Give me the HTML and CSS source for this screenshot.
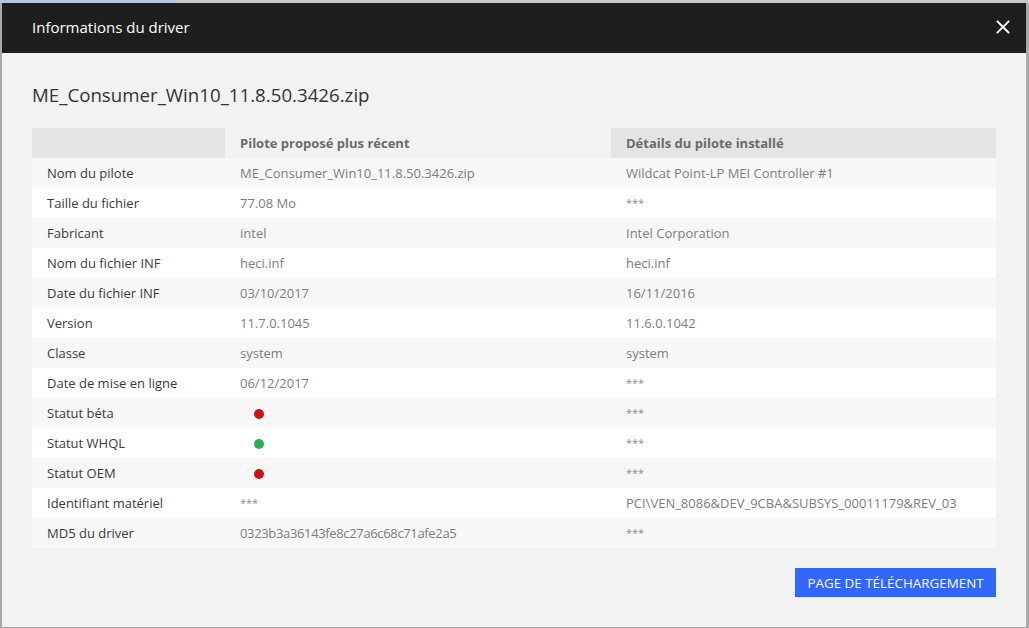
FILE: index.html
```html
<!DOCTYPE html>
<html lang="fr">
<head>
<meta charset="utf-8">
<title>Informations du driver</title>
<link rel="stylesheet" href="styles.css">
</head>
<body>
<div class="topstrip"></div>
<div class="modal">
  <div class="modal-header">
    <span class="modal-title">Informations du driver</span>
    <svg class="close" width="14" height="14" viewBox="0 0 14 14"><path d="M1.5 1.5L12.5 12.5M12.5 1.5L1.5 12.5" stroke="#fff" stroke-width="1.9" stroke-linecap="square"/></svg>
  </div>
  <div class="modal-body">
    <h2 class="file-title">ME_Consumer_Win10_11.8.50.3426.zip</h2>
    <table class="info">
      <thead>
        <tr><th class="c1"></th><th class="c2">Pilote proposé plus récent</th><th class="c3">Détails du pilote installé</th></tr>
      </thead>
      <tbody>
        <tr><td>Nom du pilote</td><td>ME_Consumer_Win10_11.8.50.3426.zip</td><td>Wildcat Point-LP MEI Controller #1</td></tr>
        <tr><td>Taille du fichier</td><td>77.08 Mo</td><td class="stars">***</td></tr>
        <tr><td>Fabricant</td><td>intel</td><td>Intel Corporation</td></tr>
        <tr><td>Nom du fichier INF</td><td>heci.inf</td><td>heci.inf</td></tr>
        <tr><td>Date du fichier INF</td><td>03/10/2017</td><td>16/11/2016</td></tr>
        <tr><td>Version</td><td>11.7.0.1045</td><td>11.6.0.1042</td></tr>
        <tr><td>Classe</td><td>system</td><td>system</td></tr>
        <tr><td>Date de mise en ligne</td><td>06/12/2017</td><td class="stars">***</td></tr>
        <tr><td>Statut béta</td><td><span class="dot red"></span></td><td class="stars">***</td></tr>
        <tr><td>Statut WHQL</td><td><span class="dot green"></span></td><td class="stars">***</td></tr>
        <tr><td>Statut OEM</td><td><span class="dot red"></span></td><td class="stars">***</td></tr>
        <tr><td>Identifiant matériel</td><td class="stars">***</td><td>PCI\VEN_8086&amp;DEV_9CBA&amp;SUBSYS_00011179&amp;REV_03</td></tr>
        <tr><td>MD5 du driver</td><td class="tight">0323b3a36143fe8c27a6c68c71afe2a5</td><td class="stars">***</td></tr>
      </tbody>
    </table>
    <div class="actions">
      <button class="btn">PAGE DE TÉLÉCHARGEMENT</button>
    </div>
  </div>
</div>
</body>
</html>
```
FILE: styles.css
```css
html, body {
  margin: 0;
  padding: 0;
}
body {
  background: #a9a9a9;
  height: 628px;
  overflow: hidden;
  font-family: "Open Sans", "Liberation Sans", sans-serif;
}
.topstrip {
  height: 3px;
  background: linear-gradient(to right, #b8c2e8 0, #b8c2e8 175px, #c8c8c8 175px);
}
.modal {
  margin-left: 2px;
  width: 1024px;
  height: 624px;
  background: #f2f2f2;
  display: flex;
  flex-direction: column;
}
.modal-header {
  height: 50px;
  background: #1e1e1e;
  display: flex;
  align-items: center;
  justify-content: space-between;
  padding: 0 16px 2px 30px;
  box-sizing: border-box;
}
.modal-title {
  color: #fff;
  font-size: 15px;
}
.close {
  display: block;
}
.modal-body {
  padding: 30px 30px 0 30px;
}
.file-title {
  margin: 0 0 21px 0;
  font-weight: normal;
  font-size: 18.7px;
  line-height: 24px;
  color: #333;
}
.info {
  width: 964px;
  border-collapse: collapse;
  table-layout: fixed;
  font-size: 13px;
}
.info th, .info td {
  height: 30px;
  padding: 0 15px 1px 15px;
  text-align: left;
  white-space: nowrap;
  box-sizing: border-box;
}
.info th {
  font-weight: bold;
  color: #6b6b6b;
}
.info th.c1 { width: 193px; background: #e4e4e4; }
.info th.c2 { width: 386px; background: #f2f2f2; }
.info th.c3 { width: 385px; background: #e4e4e4; }
.info tbody tr:nth-child(odd) { background: #f7f7f7; }
.info tbody tr:nth-child(even) { background: #ffffff; }
.info td { color: #7d7d7d; }
.info td:first-child { color: #3a3a3a; }
.info td.stars { color: #8a8a8a; font-size: 11px; }
.info td.tight { letter-spacing: -0.35px; }
.dot {
  display: inline-block;
  width: 10px;
  height: 10px;
  border-radius: 50%;
  margin-left: 14px;
  vertical-align: middle;
}
.dot.red { background: #c81616; }
.dot.green { background: #2ab052; }
.actions {
  display: flex;
  justify-content: flex-end;
  margin-top: 20px;
}
.btn {
  width: 201px;
  height: 29px;
  background: #3366ff;
  color: #fff;
  border: none;
  font-family: inherit;
  font-size: 13.4px;
  padding: 0;
}
```
